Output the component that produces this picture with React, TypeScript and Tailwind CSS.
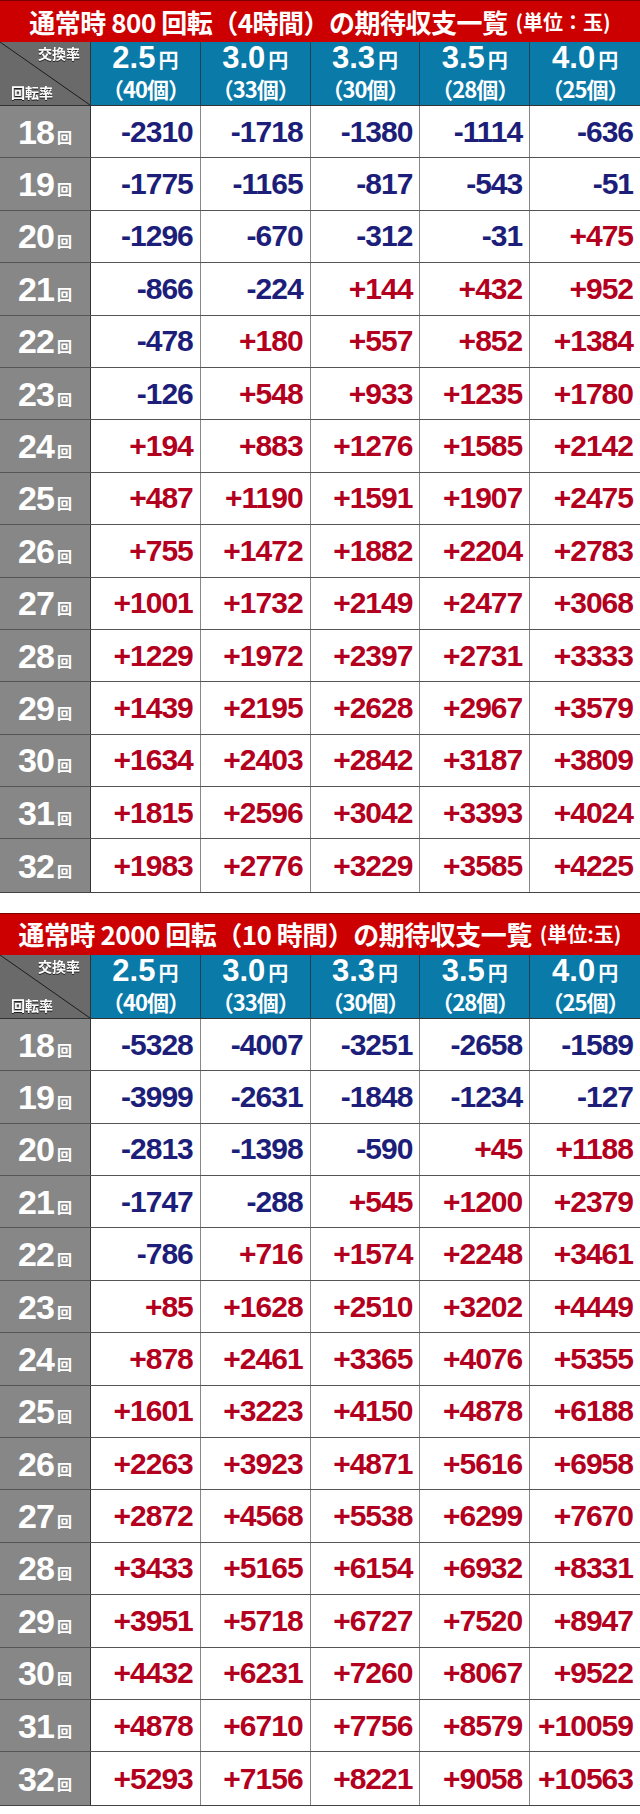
const rates = [
  { yen: '2.5', count: '40' },
  { yen: '3.0', count: '33' },
  { yen: '3.3', count: '30' },
  { yen: '3.5', count: '28' },
  { yen: '4.0', count: '25' },
]

const table800 = [
  '-2310 -1718 -1380 -1114 -636',
  '-1775 -1165 -817 -543 -51',
  '-1296 -670 -312 -31 +475',
  '-866 -224 +144 +432 +952',
  '-478 +180 +557 +852 +1384',
  '-126 +548 +933 +1235 +1780',
  '+194 +883 +1276 +1585 +2142',
  '+487 +1190 +1591 +1907 +2475',
  '+755 +1472 +1882 +2204 +2783',
  '+1001 +1732 +2149 +2477 +3068',
  '+1229 +1972 +2397 +2731 +3333',
  '+1439 +2195 +2628 +2967 +3579',
  '+1634 +2403 +2842 +3187 +3809',
  '+1815 +2596 +3042 +3393 +4024',
  '+1983 +2776 +3229 +3585 +4225',
]

const table2000 = [
  '-5328 -4007 -3251 -2658 -1589',
  '-3999 -2631 -1848 -1234 -127',
  '-2813 -1398 -590 +45 +1188',
  '-1747 -288 +545 +1200 +2379',
  '-786 +716 +1574 +2248 +3461',
  '+85 +1628 +2510 +3202 +4449',
  '+878 +2461 +3365 +4076 +5355',
  '+1601 +3223 +4150 +4878 +6188',
  '+2263 +3923 +4871 +5616 +6958',
  '+2872 +4568 +5538 +6299 +7670',
  '+3433 +5165 +6154 +6932 +8331',
  '+3951 +5718 +6727 +7520 +8947',
  '+4432 +6231 +7260 +8067 +9522',
  '+4878 +6710 +7756 +8579 +10059',
  '+5293 +7156 +8221 +9058 +10563',
]

const jp = "font-['Noto_Sans_CJK_JP',sans-serif]"
const num = "font-['Liberation_Sans','Noto_Sans_CJK_JP',sans-serif]"

function Table({ title, unit, rows }: { title: React.ReactNode; unit: string; rows: string[] }) {
  return (
    <div className="w-[640px] border-b border-[#444]">
      {/* Title bar */}
      <div className={`h-[42px] bg-[#cc0000] border-t border-[#7a0000] flex items-center justify-center text-white font-bold ${jp}`}>
        <span className="text-[26px] leading-[32px] tracking-[-0.5px]">{title}</span>
        <span className="text-[20px] leading-[32px] ml-2">{unit}</span>
      </div>

      {/* Header */}
      <div className="grid grid-cols-[91px_repeat(5,1fr)] h-[64px] border-b border-[#333]">
        <div className="relative bg-[#6a6a6a] border-r border-[#333]">
          <svg className="absolute inset-0 w-full h-full" viewBox="0 0 91 64" preserveAspectRatio="none">
            <line x1="0" y1="0" x2="91" y2="64" stroke="#1a1a1a" strokeWidth="1" />
          </svg>
          <span className={`absolute right-[10px] top-[3px] text-[14px] font-bold text-white leading-[16px] drop-shadow-[0_1px_0_#222] ${jp}`}>
            交換率
          </span>
          <span className={`absolute left-[11px] bottom-[5px] text-[14px] font-bold text-white leading-[16px] drop-shadow-[0_1px_0_#222] ${jp}`}>
            回転率
          </span>
        </div>
        {rates.map((r) => (
          <div
            key={r.yen}
            className="bg-[#0a7aa8] border-r border-[#1f4256] last:border-r-0 flex flex-col items-center justify-center text-white font-bold"
          >
            <div className="flex items-baseline h-[30px]">
              <span className={`text-[31px] leading-[30px] ${num}`}>{r.yen}</span>
              <span className={`text-[20px] leading-[30px] ml-[3px] ${jp}`}>円</span>
            </div>
            <div className={`text-[22px] leading-[31px] tracking-[-1px] whitespace-nowrap ${jp}`}>（{r.count}個）</div>
          </div>
        ))}
      </div>

      {/* Body */}
      {rows.map((line, i) => {
        const cells = line.split(' ')
        return (
          <div key={i} className="grid grid-cols-[91px_repeat(5,1fr)] h-[52.4px] border-b border-[#555] last:border-b-0">
            <div className="bg-[#878787] border-r border-[#333] flex items-center justify-center text-white font-bold">
              <span className={`text-[34px] leading-[36px] tracking-[-1px] ${num}`}>{18 + i}</span>
              <span className={`text-[15px] leading-[16px] ml-[3px] mt-[10px] ${jp}`}>回</span>
            </div>
            {cells.map((c, j) => (
              <div
                key={j}
                className={`bg-white border-r border-[#888] last:border-r-0 flex items-center justify-end pr-[7px] text-[30px] font-bold tracking-[-1px] leading-[34px] ${num} ${
                  c.startsWith('-') ? 'text-[#1c1e7a]' : 'text-[#b3001e]'
                }`}
              >
                {c}
              </div>
            ))}
          </div>
        )
      })}
    </div>
  )
}

export default function App() {
  return (
    <div className="w-[640px] h-[1814px] bg-white flex flex-col gap-[20px]">
      <Table title="通常時 800 回転（4時間）の期待収支一覧" unit="(単位：玉)" rows={table800} />
      <Table title="通常時 2000 回転（10 時間）の期待収支一覧" unit="(単位:玉)" rows={table2000} />
    </div>
  )
}
